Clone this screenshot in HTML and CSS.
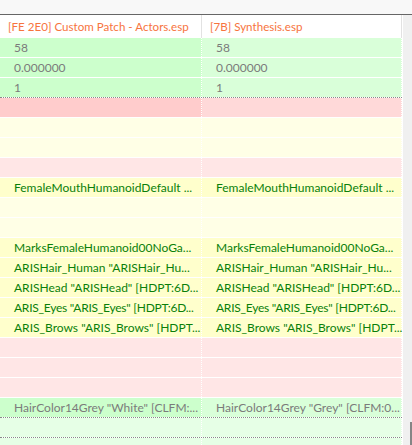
FILE: index.html
```html
<!DOCTYPE html>
<html lang="en">
<head>
<meta charset="UTF-8">
<title>Compare</title>
<link rel="stylesheet" href="styles.css">
</head>
<body>
<div class="toolbar"></div>
<div class="view">
    <div class="grid">
        <div class="row head">
            <div class="cell">[FE 2E0] Custom Patch - Actors.esp</div>
            <div class="cell">[7B] Synthesis.esp</div>
        </div>
        <div class="row same"><div class="cell">58</div><div class="cell">58</div></div>
        <div class="row same"><div class="cell">0.000000</div><div class="cell">0.000000</div></div>
        <div class="row same dark"><div class="cell">1</div><div class="cell">1</div></div>
        <div class="row miss"><div class="cell"></div><div class="cell"></div></div>
        <div class="row pale"><div class="cell"></div><div class="cell"></div></div>
        <div class="row pale"><div class="cell"></div><div class="cell"></div></div>
        <div class="row rose"><div class="cell"></div><div class="cell"></div></div>
        <div class="row ref"><div class="cell">FemaleMouthHumanoidDefault ...</div><div class="cell">FemaleMouthHumanoidDefault ...</div></div>
        <div class="row pale"><div class="cell"></div><div class="cell"></div></div>
        <div class="row pale"><div class="cell"></div><div class="cell"></div></div>
        <div class="row ref"><div class="cell">MarksFemaleHumanoid00NoGa...</div><div class="cell">MarksFemaleHumanoid00NoGa...</div></div>
        <div class="row ref"><div class="cell">ARISHair_Human "ARISHair_Hu...</div><div class="cell">ARISHair_Human "ARISHair_Hu...</div></div>
        <div class="row ref"><div class="cell">ARISHead "ARISHead" [HDPT:6D...</div><div class="cell">ARISHead "ARISHead" [HDPT:6D...</div></div>
        <div class="row ref tight"><div class="cell">ARIS_Eyes "ARIS_Eyes" [HDPT:6D...</div><div class="cell">ARIS_Eyes "ARIS_Eyes" [HDPT:6D...</div></div>
        <div class="row ref"><div class="cell">ARIS_Brows "ARIS_Brows" [HDPT...</div><div class="cell">ARIS_Brows "ARIS_Brows" [HDPT...</div></div>
        <div class="row rose"><div class="cell"></div><div class="cell"></div></div>
        <div class="row rose"><div class="cell"></div><div class="cell"></div></div>
        <div class="row rose"><div class="cell"></div><div class="cell"></div></div>
        <div class="row same dark"><div class="cell">HairColor14Grey "White" [CLFM:...</div><div class="cell">HairColor14Grey "Grey" [CLFM:0...</div></div>
        <div class="row mint dark"><div class="cell"></div><div class="cell"></div></div>
        <div class="row mint dark"><div class="cell"></div><div class="cell"></div></div>
    </div>
    <div class="scroll"><div class="thumb"></div></div>
</div>
</body>
</html>
```

FILE: styles.css
```css
body {margin: 0; height: 445px; overflow: hidden; background: #f0f0f0; font-family: Lato, 'Noto Sans', sans-serif; font-size: 12px;}
.toolbar {height: 14px; background: #f8f8f8; border-bottom: 1px solid #666;}
.view {display: flex; height: 430px; overflow: hidden;}
.grid {width: 402px; padding-right: 1px; background: #fff;}
.scroll {flex: 1; display: flex; flex-direction: column; justify-content: flex-end; align-items: flex-end;}
.scroll .thumb {width: 2px; height: 23px; background: #858585;}

.row {display: flex; height: 19px; border-bottom: 1px dotted #fff;}
.row .cell {line-height: 20px; padding-left: 14px; white-space: nowrap; border-right: 1px dotted #fff;}
.row .cell:first-child {width: 187px;}
.row .cell:last-child {width: 185px;}
.row.dark {border-bottom-color: #8a8a8a;}
.row.tight {letter-spacing: -0.25px;}

.row.head {height: 23px; border-bottom: 0; background: #fff; color: #f7743e; font-size: 11.6px;}
.row.head .cell {line-height: 24px; padding-left: 8px; border-right: 1px solid #e2e2e2;}
.row.head .cell:first-child {width: 193px;}
.row.head .cell:last-child {width: 191px;}

.row.same {color: #7b7b7b;}
.row.same .cell:first-child {background: #ccffcc;}
.row.same .cell:last-child {background: #d9ffd9;}
.row.miss .cell:first-child {background: #ffcccc;}
.row.miss .cell:last-child {background: #ffd9d9;}
.row.pale .cell {background: #ffffe6;}
.row.rose .cell {background: #ffe6e6;}
.row.ref {color: #0a7f0a;}
.row.ref .cell {background: #ffffcc;}
.row.mint .cell {background: #e6ffe6;}
```
